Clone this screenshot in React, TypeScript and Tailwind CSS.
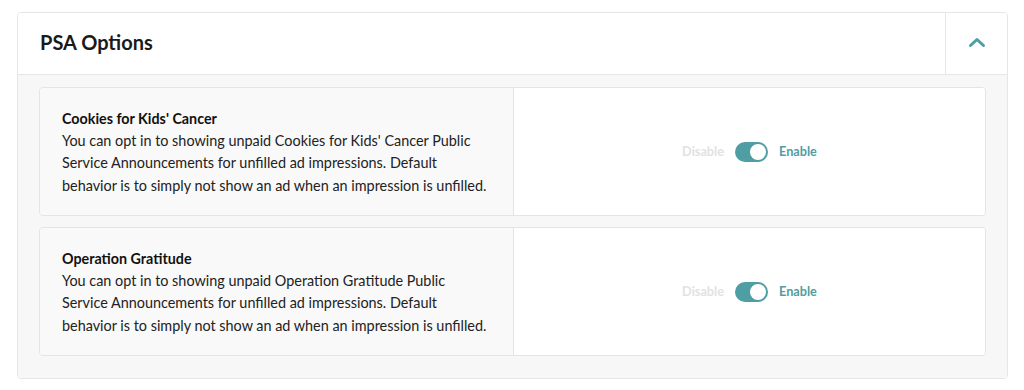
import { useState } from "react";

type PsaOption = {
  id: string;
  title: string;
  lines: string[];
};

const options: PsaOption[] = [
  {
    id: "cookies",
    title: "Cookies for Kids' Cancer",
    lines: [
      "You can opt in to showing unpaid Cookies for Kids' Cancer Public",
      "Service Announcements for unfilled ad impressions. Default",
      "behavior is to simply not show an ad when an impression is unfilled.",
    ],
  },
  {
    id: "gratitude",
    title: "Operation Gratitude",
    lines: [
      "You can opt in to showing unpaid Operation Gratitude Public",
      "Service Announcements for unfilled ad impressions. Default",
      "behavior is to simply not show an ad when an impression is unfilled.",
    ],
  },
];

function Toggle({ on, onChange }: { on: boolean; onChange: () => void }) {
  return (
    <div className="flex items-center gap-[11px] text-[12.7px] font-bold">
      <span className={on ? "text-[#e2e2e2]" : "text-[#4e9ea3]"}>Disable</span>
      <button
        type="button"
        onClick={onChange}
        className={`flex h-[20px] w-[33px] items-center rounded-full p-[2px] ${
          on ? "justify-end bg-[#4e9ea3]" : "justify-start bg-[#d9d9d9]"
        }`}
      >
        <span className="h-[16px] w-[16px] rounded-full bg-white" />
      </button>
      <span className={on ? "text-[#4e9ea3]" : "text-[#e2e2e2]"}>Enable</span>
    </div>
  );
}

function OptionRow({ option }: { option: PsaOption }) {
  const [enabled, setEnabled] = useState(true);

  return (
    <div className="flex h-[129px] overflow-hidden rounded-[4px] border border-[#e4e4e4]">
      <div className="flex w-[474px] flex-col justify-center border-r border-[#e4e4e4] bg-[#f9f9f9] pl-[22px] pr-[10px] pt-[2px]">
        <h3 className="text-[14.3px] font-bold leading-[22px] text-[#111]">
          {option.title}
        </h3>
        <p className="whitespace-nowrap text-[14.4px] leading-[22.5px] text-[#222]">
          {option.lines.map((line) => (
            <span key={line} className="block">
              {line}
            </span>
          ))}
        </p>
      </div>
      <div className="flex flex-1 items-center justify-center bg-white">
        <Toggle on={enabled} onChange={() => setEnabled(!enabled)} />
      </div>
    </div>
  );
}

export default function App() {
  return (
    <div
      className="min-h-[390px] bg-white pl-[17px] pt-[12px]"
      style={{ fontFamily: "Lato, 'Open Sans', sans-serif" }}
    >
      <div className="w-[991px] overflow-hidden rounded-[4px] border border-[#e6e6e6]">
        <div className="flex h-[62px] border-b border-[#e6e6e6] bg-white">
          <h2 className="flex flex-1 items-center pb-[3px] pl-[22px] text-[20px] font-bold text-[#1a1a1a]">
            PSA Options
          </h2>
          <button
            type="button"
            className="flex w-[62px] items-center justify-center border-l border-[#e6e6e6] pb-[2px]"
          >
            <svg width="18" height="11" viewBox="0 0 18 11" fill="none">
              <path
                d="M2.5 8.5 L9 2.5 L15.5 8.5"
                stroke="#4e9ea3"
                strokeWidth="3"
                strokeLinecap="round"
                strokeLinejoin="round"
              />
            </svg>
          </button>
        </div>
        <div className="flex flex-col gap-[11px] bg-[#f7f7f7] px-[21px] pb-[22px] pt-[12px]">
          {options.map((option) => (
            <OptionRow key={option.id} option={option} />
          ))}
        </div>
      </div>
    </div>
  );
}
